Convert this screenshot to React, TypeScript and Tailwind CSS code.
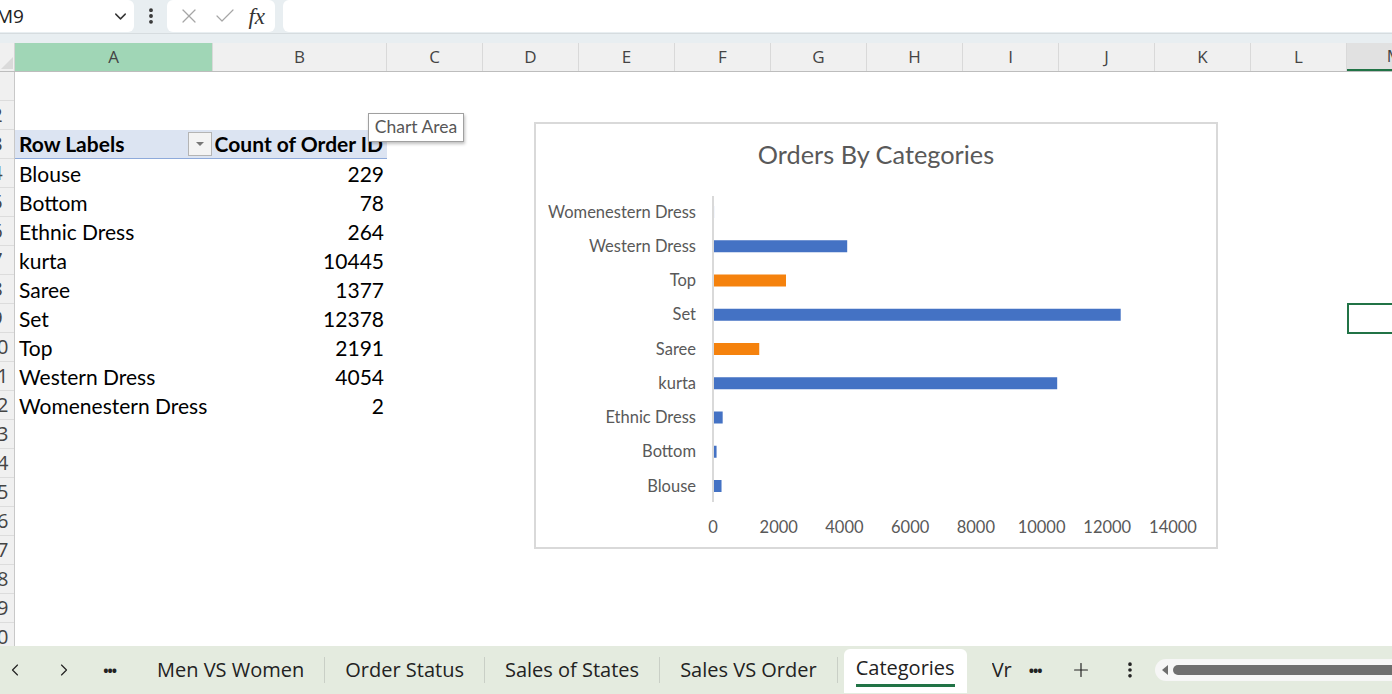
import { ChevronDown, ChevronLeft, ChevronRight, Plus, X, Check, EllipsisVertical } from "lucide-react";

const cols = [
  { id: "A", w: 198 },
  { id: "B", w: 174 },
  { id: "C", w: 96 },
  { id: "D", w: 96 },
  { id: "E", w: 96 },
  { id: "F", w: 96 },
  { id: "G", w: 96 },
  { id: "H", w: 96 },
  { id: "I", w: 96 },
  { id: "J", w: 96 },
  { id: "K", w: 96 },
  { id: "L", w: 96 },
  { id: "M", w: 96 },
];

const pivot = [
  ["Blouse", "229"],
  ["Bottom", "78"],
  ["Ethnic Dress", "264"],
  ["kurta", "10445"],
  ["Saree", "1377"],
  ["Set", "12378"],
  ["Top", "2191"],
  ["Western Dress", "4054"],
  ["Womenestern Dress", "2"],
];

const bars = [
  { label: "Womenestern Dress", v: 2, c: "#4472c4" },
  { label: "Western Dress", v: 4054, c: "#4472c4" },
  { label: "Top", v: 2191, c: "#f5820d" },
  { label: "Set", v: 12378, c: "#4472c4" },
  { label: "Saree", v: 1377, c: "#f5820d" },
  { label: "kurta", v: 10445, c: "#4472c4" },
  { label: "Ethnic Dress", v: 264, c: "#4472c4" },
  { label: "Bottom", v: 78, c: "#4472c4" },
  { label: "Blouse", v: 229, c: "#4472c4" },
];

const tabs = ["Men VS Women", "Order Status", "Sales of States", "Sales VS Order"];

const Chart = () => {
  const x0 = 179;
  const scale = 460 / 14000;
  return (
    <svg width="684" height="427" className="block">
      <text x="342" y="42" textAnchor="middle" fontSize="25.3" fill="#595959" fontFamily="Lato, sans-serif">
        Orders By Categories
      </text>
      <line x1={x0} y1="74" x2={x0} y2="380" stroke="#d9d9d9" strokeWidth="2" />
      {bars.map((b, i) => {
        const cy = 90 + i * 34.25;
        return (
          <g key={b.label}>
            <text x="162" y={cy + 5.5} textAnchor="end" fontSize="16.5" fill="#595959" fontFamily="Lato, sans-serif">
              {b.label}
            </text>
            <rect x={x0 + 1} y={cy - 6} width={b.v * scale} height="12" fill={b.c} />
          </g>
        );
      })}
      {[0, 2000, 4000, 6000, 8000, 10000, 12000, 14000].map((t) => (
        <text key={t} x={x0 + t * scale} y="411" textAnchor="middle" fontSize="16.5" fill="#595959" fontFamily="Lato, sans-serif">
          {t}
        </text>
      ))}
    </svg>
  );
};

export default function App() {
  return (
    <div className="w-[1392px] h-[694px] overflow-hidden flex flex-col bg-white font-['Lato',sans-serif]">
      {/* formula bar */}
      <div className="h-[33px] flex items-stretch bg-[#e8eef1] shrink-0 pb-[1px]">
        <div className="w-[138px] bg-white rounded-r-[6px] flex items-center justify-between pr-[4px] -ml-[4px] font-['Open_Sans',sans-serif] text-[19px] text-[#222]">
          <span>M9</span>
          <ChevronDown size={19} strokeWidth={1.8} className="text-[#333]" />
        </div>
        <div className="w-[33px] flex items-center justify-center">
          <EllipsisVertical size={20} strokeWidth={2.6} className="text-[#333]" />
        </div>
        <div className="w-[108px] bg-white rounded-[6px] flex items-center justify-around px-[4px]">
          <X size={24} strokeWidth={1.2} className="text-[#a6a6a6]" />
          <Check size={24} strokeWidth={1.2} className="text-[#a6a6a6]" />
          <span className="font-['Liberation_Serif',serif] italic text-[23px] text-[#333] leading-none">fx</span>
        </div>
        <div className="flex-1 bg-white rounded-l-[6px] ml-[8px]" />
      </div>
      <div className="h-[10px] bg-[#e8eef1] shrink-0 border-t border-[#d6dcdf]" />
      {/* column headers */}
      <div className="h-[29px] flex shrink-0 bg-[#f0f0f0] border-b border-[#bdbdbd] font-['Open_Sans',sans-serif] text-[17px] text-[#444]">
        <div className="w-[15px] shrink-0 border-r border-[#d4d4d4] relative overflow-hidden">
          <div className="absolute right-[1px] bottom-[2px] w-0 h-0 border-l-[12px] border-l-transparent border-b-[12px] border-b-[#dadada]" />
        </div>
        {cols.map((c) => (
          <div
            key={c.id}
            style={{ width: c.w }}
            className={
              "shrink-0 flex items-center justify-center border-r border-[#d9d9d9] " +
              (c.id === "A" ? "bg-[#a0d6b6] " : "") +
              (c.id === "M" ? "bg-[#e1e1e1] border-b-2 border-b-[#217346] " : "")
            }
          >
            {c.id}
          </div>
        ))}
      </div>
      {/* sheet body */}
      <div className="flex-1 relative flex overflow-hidden">
        <div className="w-[15px] shrink-0 bg-[#f0f0f0] border-r border-[#c8c8c8] overflow-hidden font-['Open_Sans',sans-serif] text-[20px] text-[#444]">
          {Array.from({ length: 20 }, (_, i) => (
            <div key={i} className="h-[29px] border-b border-[#dcdcdc] overflow-hidden">
              <div className="w-[40px] -ml-[23px] h-full flex items-center justify-center">{i + 1}</div>
            </div>
          ))}
        </div>
        <div className="flex-1 text-[21px] text-black">
          <div className="h-[58px]" />
          <div className="w-[372px] h-[29px] flex bg-[#dce4f2] border-b border-[#8eaadb] font-bold">
            <div className="w-[198px] flex items-center justify-between pl-[4px] pr-[1px]">
              <span>Row Labels</span>
              <div className="w-[24px] h-[24px] border border-[#b4b4b4] bg-[#f3f3f3] flex items-center justify-center">
                <div className="w-0 h-0 border-l-[4px] border-r-[4px] border-t-[4px] border-l-transparent border-r-transparent border-t-[#777]" />
              </div>
            </div>
            <div className="w-[174px] flex items-center justify-end pr-[4px] whitespace-nowrap overflow-hidden">
              Count of Order ID
            </div>
          </div>
          {pivot.map(([k, v]) => (
            <div key={k} className="w-[372px] h-[29px] flex items-center">
              <div className="w-[198px] pl-[4px] whitespace-nowrap">{k}</div>
              <div className="w-[174px] text-right pr-[3px]">{v}</div>
            </div>
          ))}
        </div>

        {/* chart object */}
        <div className="absolute left-[534px] top-[50px] w-[684px] h-[427px] bg-white border-2 border-[#d9d9d9]">
          <div className="-m-[2px]">
            <Chart />
          </div>
        </div>
        {/* tooltip */}
        <div className="absolute left-[368px] top-[41px] w-[96px] h-[29px] bg-white border border-[#a0a0a0] shadow-[1px_2px_3px_rgba(0,0,0,0.25)] flex items-center justify-center text-[17.5px] text-[#575757] font-['Lato',sans-serif]">
          Chart Area
        </div>
        {/* selected cell */}
        <div className="absolute left-[1347px] top-[231px] w-[60px] h-[31px] border-2 border-[#217346]" />
      </div>
      {/* sheet tabs */}
      <div className="h-[48px] shrink-0 bg-[#e4ebdf] flex items-center font-['Open_Sans',sans-serif] text-[20px] text-[#222]">
        <div className="w-[25px] shrink-0 flex justify-end">
          <ChevronLeft size={20} strokeWidth={1.4} />
        </div>
        <div className="w-[49px] shrink-0 flex justify-end">
          <ChevronRight size={20} strokeWidth={1.4} />
        </div>
        <div className="w-[48px] shrink-0 flex justify-end pr-[6px] text-[14px] tracking-[-1px] font-bold">•••</div>
        <div className="shrink-0 flex items-center ml-[15px]">
          {tabs.map((t) => (
            <div key={t} className="flex items-center">
              <div className="px-[20px] whitespace-nowrap">{t}</div>
              <div className="w-px h-[26px] bg-[#c9cfc6]" />
            </div>
          ))}
          <div className="self-stretch mt-[2px] h-[44px] bg-white rounded-t-[6px] px-[12px] flex flex-col justify-center ml-[6px]">
            <span className="whitespace-nowrap leading-none pt-[2px]">Categories</span>
            <div className="h-[3px] bg-[#217346] mt-[6px]" />
          </div>
        </div>
        <div className="ml-[25px] w-[20px] shrink-0 overflow-hidden whitespace-nowrap">Vr</div>
        <div className="ml-[17px] shrink-0 text-[14px] tracking-[-1px] font-bold">•••</div>
        <Plus size={22} strokeWidth={1.3} className="ml-[29px] shrink-0" />
        <EllipsisVertical size={20} strokeWidth={2.4} className="ml-[28px] shrink-0" />
        <div className="ml-[15px] flex-1 h-[22px] bg-[#f6f6f6] rounded-l-[11px] flex items-center pl-[7px]">
          <div className="w-0 h-0 border-t-[5px] border-b-[5px] border-r-[6px] border-t-transparent border-b-transparent border-r-[#6e6e6e]" />
          <div className="ml-[5px] flex-1 h-[10px] bg-[#6e6e6e] rounded-l-[5px]" />
        </div>
      </div>
    </div>
  );
}
